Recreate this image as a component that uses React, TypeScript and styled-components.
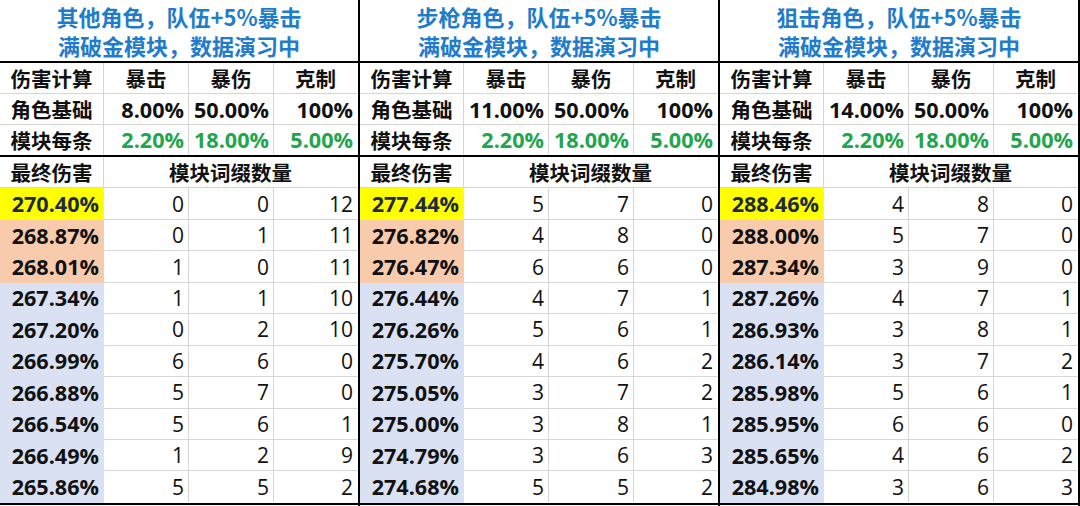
import React from "react";
import styled, { createGlobalStyle, css } from "styled-components";

const GlobalStyle = createGlobalStyle`
  html, body { margin: 0; padding: 0; background: #ffffff; }
  * { box-sizing: border-box; }
`;

type Fill = "none" | "yellow" | "peach" | "blue";

const FILLS: Record<Fill, string> = {
  none: "#ffffff",
  yellow: "#ffff00",
  peach: "#f8cbad",
  blue: "#d9e1f2",
};

const Page = styled.div`
  display: flex;
  width: 1080px;
  height: 506px;
  overflow: hidden;
  background: #ffffff;
  font-family: "Open Sans", "Noto Sans CJK SC", sans-serif;
  color: #111111;
`;

const Panel = styled.section`
  width: 360px;
  flex: 0 0 360px;
  border-right: 2px solid #000000;
  display: flex;
  flex-direction: column;
`;

const Title = styled.header`
  height: 63px;
  border-bottom: 2px solid #000000;
  display: flex;
  flex-direction: column;
  align-items: center;
  justify-content: center;
  color: #1f7ccc;
  font-family: "Noto Sans CJK SC", sans-serif;
  font-weight: 700;
  font-size: 22px;
  line-height: 29px;
`;

const Grid = styled.div<{ $rows: string; $lower?: boolean }>`
  display: grid;
  grid-template-columns: 104px 85px 85px 84px;
  grid-template-rows: ${(p) => p.$rows};
  ${(p) =>
    p.$lower &&
    css`
      border-top: 2px solid #000000;
      border-bottom: 2px solid #000000;
    `}
`;

const Cell = styled.div<{
  $align?: "left" | "center" | "right";
  $fill?: Fill;
  $last?: boolean;
  $span?: number;
  $bold?: boolean;
  $green?: boolean;
  $cjk?: boolean;
  $dark?: boolean;
}>`
  display: flex;
  align-items: center;
  justify-content: ${(p) =>
    p.$align === "left" ? "flex-start" : p.$align === "right" ? "flex-end" : "center"};
  padding: 0 4px;
  white-space: nowrap;
  background: ${(p) => FILLS[p.$fill ?? "none"]};
  border-right: 1px solid
    ${(p) => (p.$last ? "transparent" : p.$fill && p.$fill !== "none" ? "transparent" : "#d6d6d6")};
  border-bottom: 1px solid
    ${(p) => (p.$fill && p.$fill !== "none" ? "transparent" : "#d6d6d6")};
  grid-column: ${(p) => (p.$span ? `span ${p.$span}` : "auto")};
  font-size: ${(p) => (p.$cjk ? "20.5px" : p.$bold ? "21.6px" : "21px")};
  font-weight: ${(p) => (p.$bold ? 700 : 400)};
  font-family: ${(p) =>
    p.$cjk ? `"Noto Sans CJK SC", sans-serif` : `"Open Sans", "Noto Sans CJK SC", sans-serif`};
  color: ${(p) => (p.$green ? "#22a64c" : p.$dark ? "#1e2b3a" : "#111111")};
  &:nth-last-child(-n + 4) {
    border-bottom-color: transparent;
  }
`;

type Row = [string, number, number, number];

interface TableData {
  title: string;
  crit: string;
  rows: Row[];
}

const TABLES: TableData[] = [
  {
    title: "其他角色，队伍+5%暴击",
    crit: "8.00%",
    rows: [
      ["270.40%", 0, 0, 12],
      ["268.87%", 0, 1, 11],
      ["268.01%", 1, 0, 11],
      ["267.34%", 1, 1, 10],
      ["267.20%", 0, 2, 10],
      ["266.99%", 6, 6, 0],
      ["266.88%", 5, 7, 0],
      ["266.54%", 5, 6, 1],
      ["266.49%", 1, 2, 9],
      ["265.86%", 5, 5, 2],
    ],
  },
  {
    title: "步枪角色，队伍+5%暴击",
    crit: "11.00%",
    rows: [
      ["277.44%", 5, 7, 0],
      ["276.82%", 4, 8, 0],
      ["276.47%", 6, 6, 0],
      ["276.44%", 4, 7, 1],
      ["276.26%", 5, 6, 1],
      ["275.70%", 4, 6, 2],
      ["275.05%", 3, 7, 2],
      ["275.00%", 3, 8, 1],
      ["274.79%", 3, 6, 3],
      ["274.68%", 5, 5, 2],
    ],
  },
  {
    title: "狙击角色，队伍+5%暴击",
    crit: "14.00%",
    rows: [
      ["288.46%", 4, 8, 0],
      ["288.00%", 5, 7, 0],
      ["287.34%", 3, 9, 0],
      ["287.26%", 4, 7, 1],
      ["286.93%", 3, 8, 1],
      ["286.14%", 3, 7, 2],
      ["285.98%", 5, 6, 1],
      ["285.95%", 6, 6, 0],
      ["285.65%", 4, 6, 2],
      ["284.98%", 3, 6, 3],
    ],
  },
];

const fillFor = (i: number): Fill => (i === 0 ? "yellow" : i < 3 ? "peach" : "blue");

const Table: React.FC<{ data: TableData }> = ({ data }) => (
  <Panel>
    <Title>
      <span>{data.title}</span>
      <span>满破金模块，数据演习中</span>
    </Title>
    <Grid $rows="31px 31px 30px">
      <Cell $cjk $bold>伤害计算</Cell>
      <Cell $cjk $bold>暴击</Cell>
      <Cell $cjk $bold>暴伤</Cell>
      <Cell $cjk $bold $last>克制</Cell>

      <Cell $cjk $bold>角色基础</Cell>
      <Cell $bold $align="right">{data.crit}</Cell>
      <Cell $bold $align="right">50.00%</Cell>
      <Cell $bold $align="right" $last>100%</Cell>

      <Cell $cjk $bold>模块每条</Cell>
      <Cell $bold $green $align="right">2.20%</Cell>
      <Cell $bold $green $align="right">18.00%</Cell>
      <Cell $bold $green $align="right" $last>5.00%</Cell>
    </Grid>
    <Grid $rows="repeat(11, 31.45px)" $lower>
      <Cell $cjk $bold>最终伤害</Cell>
      <Cell $cjk $bold $span={3} $last>模块词缀数量</Cell>
      {data.rows.map((r, i) => (
        <React.Fragment key={r[0]}>
          <Cell $bold $align="right" $fill={fillFor(i)} $dark={i === 0}>
            {r[0]}
          </Cell>
          <Cell $align="right">{r[1]}</Cell>
          <Cell $align="right">{r[2]}</Cell>
          <Cell $align="right" $last>{r[3]}</Cell>
        </React.Fragment>
      ))}
    </Grid>
  </Panel>
);

export default function App() {
  return (
    <>
      <GlobalStyle />
      <Page>
        {TABLES.map((t) => (
          <Table key={t.title} data={t} />
        ))}
      </Page>
    </>
  );
}
